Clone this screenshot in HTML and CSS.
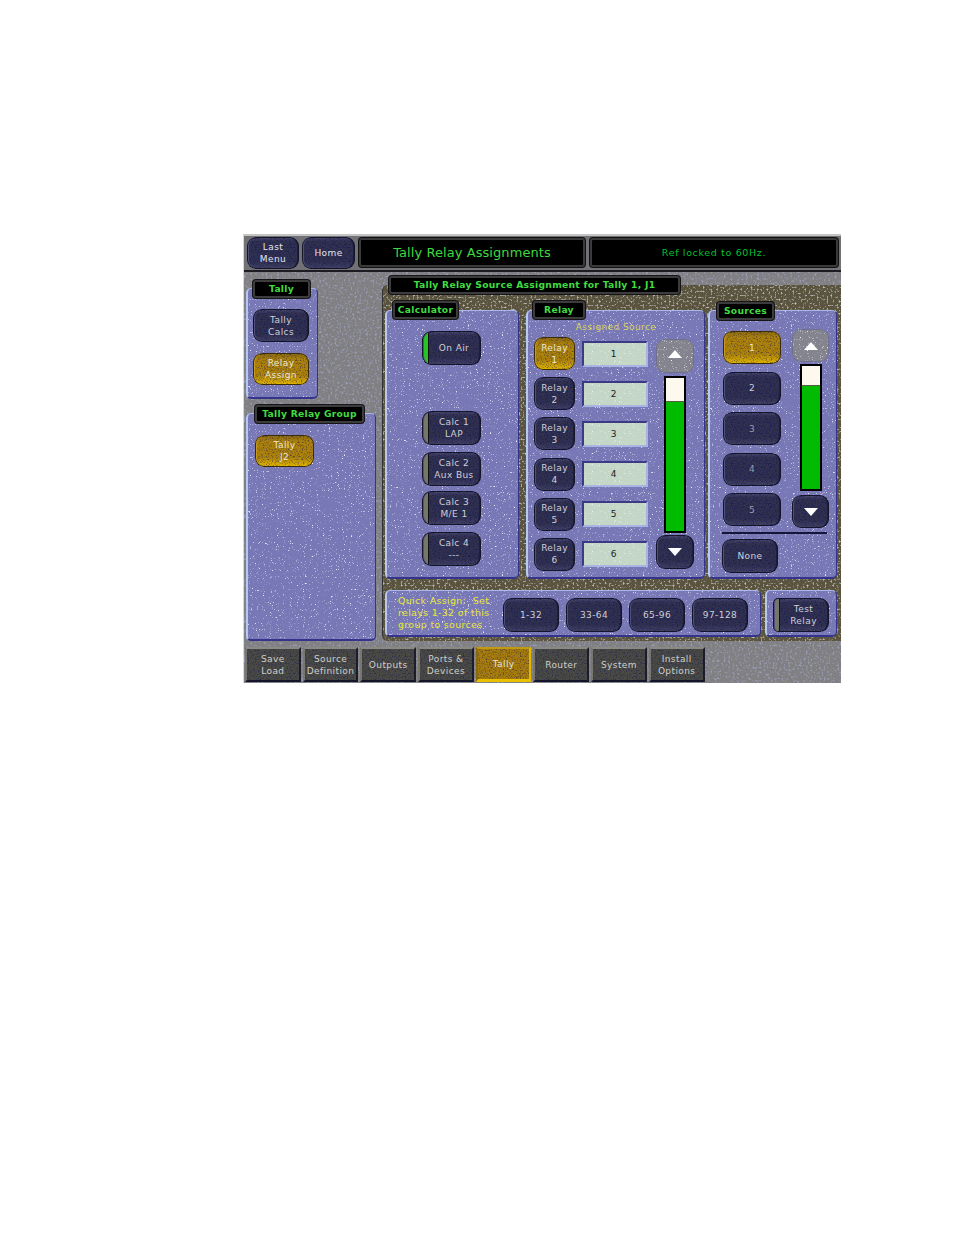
FILE: index.html
```html
<!DOCTYPE html>
<html lang="en">
<head>
    <meta charset="UTF-8">
    <title>Tally Relay Assignments</title>
    <link rel="stylesheet" href="styles.css">
</head>
<body>

<div class="app">
    <!-- Top bar -->
    <div class="topbar">
        <button class="btn top-btn">Last<br>Menu</button>
        <button class="btn top-btn home">Home</button>
        <div class="readout title-readout">Tally Relay Assignments</div>
        <div class="readout status-readout">Ref locked to 60Hz.</div>
    </div>

    <div class="workspace">
        <!-- Left column -->
        <div class="side">
            <div class="panel tally-panel">
                <div class="label tally-label">Tally</div>
                <button class="btn side-btn first">Tally<br>Calcs</button>
                <button class="btn gold side-btn">Relay<br>Assign</button>
            </div>
            <div class="panel group-panel">
                <div class="label group-label">Tally Relay Group</div>
                <button class="btn gold group-btn">Tally<br>J2</button>
            </div>
        </div>

        <!-- Main area -->
        <div class="main">
            <div class="label main-label">Tally Relay Source Assignment for Tally 1, J1</div>
            <div class="columns">
                <div class="panel calc-panel">
                    <div class="label calc-label">Calculator</div>
                    <button class="btn led on calc-btn on-air">On Air</button>
                    <button class="btn led calc-btn calc-1">Calc 1<br>LAP</button>
                    <button class="btn led calc-btn">Calc 2<br>Aux Bus</button>
                    <button class="btn led calc-btn calc-3">Calc 3<br>M/E 1</button>
                    <button class="btn led calc-btn">Calc 4<br>---</button>
                </div>

                <div class="panel relay-panel">
                    <div class="label relay-label">Relay</div>
                    <div class="caption">Assigned Source</div>
                    <div class="relay-body">
                        <div class="relay-grid">
                            <button class="btn gold relay-btn">Relay<br>1</button><div class="field">1</div>
                            <button class="btn relay-btn">Relay<br>2</button><div class="field">2</div>
                            <button class="btn relay-btn">Relay<br>3</button><div class="field">3</div>
                            <button class="btn relay-btn">Relay<br>4</button><div class="field">4</div>
                            <button class="btn relay-btn">Relay<br>5</button><div class="field">5</div>
                            <button class="btn relay-btn">Relay<br>6</button><div class="field">6</div>
                        </div>
                        <div class="scroller relay-scroller">
                            <button class="btn arrow disabled"><svg width="14" height="8" viewBox="0 0 14 8"><polygon points="7,0 14,8 0,8" fill="#fff"/></svg></button>
                            <div class="track"><div class="thumb relay-thumb"></div></div>
                            <button class="btn arrow"><svg width="14" height="8" viewBox="0 0 14 8"><polygon points="0,0 14,0 7,8" fill="#fff"/></svg></button>
                        </div>
                    </div>
                </div>

                <div class="panel sources-panel">
                    <div class="label sources-label">Sources</div>
                    <div class="sources-body">
                        <div class="sources-list">
                            <button class="btn gold source-btn">1</button>
                            <button class="btn source-btn">2</button>
                            <button class="btn source-btn dim">3</button>
                            <button class="btn source-btn dim">4</button>
                            <button class="btn source-btn dim">5</button>
                        </div>
                        <div class="scroller sources-scroller">
                            <button class="btn arrow disabled"><svg width="14" height="8" viewBox="0 0 14 8"><polygon points="7,0 14,8 0,8" fill="#fff"/></svg></button>
                            <div class="track"><div class="thumb sources-thumb"></div></div>
                            <button class="btn arrow"><svg width="14" height="8" viewBox="0 0 14 8"><polygon points="0,0 14,0 7,8" fill="#fff"/></svg></button>
                        </div>
                    </div>
                    <div class="rule"></div>
                    <button class="btn none-btn">None</button>
                </div>
            </div>

            <div class="bottom-row">
                <div class="panel quick-panel">
                    <div class="quick-text">Quick Assign:&nbsp; Set<br>relays 1-32 of this<br>group to sources</div>
                    <button class="btn quick-btn">1-32</button>
                    <button class="btn quick-btn">33-64</button>
                    <button class="btn quick-btn">65-96</button>
                    <button class="btn quick-btn">97-128</button>
                </div>
                <div class="panel test-panel">
                    <button class="btn led test-btn">Test<br>Relay</button>
                </div>
            </div>
        </div>
    </div>

    <!-- Bottom tabs -->
    <div class="tabs">
        <div class="tab">Save<br>Load</div>
        <div class="tab">Source<br>Definition</div>
        <div class="tab">Outputs</div>
        <div class="tab">Ports &amp;<br>Devices</div>
        <div class="tab active">Tally</div>
        <div class="tab">Router</div>
        <div class="tab">System</div>
        <div class="tab">Install<br>Options</div>
    </div>
</div>

</body>
</html>
```

FILE: styles.css
```css
/* General Styles */
:root {
    --speck: url("data:image/svg+xml,%3Csvg xmlns='http://www.w3.org/2000/svg' width='240' height='240'%3E%3Cfilter id='n'%3E%3CfeTurbulence type='fractalNoise' baseFrequency='.85' numOctaves='2' seed='4'/%3E%3CfeColorMatrix values='0 0 0 0 .86 0 0 0 0 .88 0 0 0 0 1 0 0 0 5 -3.2'/%3E%3C/filter%3E%3Crect width='240' height='240' filter='url(%23n)'/%3E%3C/svg%3E");
    --grain: url("data:image/svg+xml,%3Csvg xmlns='http://www.w3.org/2000/svg' width='240' height='240'%3E%3Cfilter id='n'%3E%3CfeTurbulence type='fractalNoise' baseFrequency='.7' numOctaves='2' seed='7'/%3E%3CfeColorMatrix values='0 0 0 0 0 0 0 0 0 0 0 0 0 0 .1 0 0 0 1.4 -.68'/%3E%3C/filter%3E%3Crect width='240' height='240' filter='url(%23n)'/%3E%3C/svg%3E");
    --fleck: url("data:image/svg+xml,%3Csvg xmlns='http://www.w3.org/2000/svg' width='240' height='240'%3E%3Cfilter id='n'%3E%3CfeTurbulence type='fractalNoise' baseFrequency='.45' numOctaves='3' seed='9'/%3E%3CfeColorMatrix values='0 0 0 0 .33 0 0 0 0 .33 0 0 0 0 .46 0 0 0 4 -2.1'/%3E%3C/filter%3E%3Crect width='240' height='240' filter='url(%23n)'/%3E%3C/svg%3E");
    --fleck-light: url("data:image/svg+xml,%3Csvg xmlns='http://www.w3.org/2000/svg' width='240' height='240'%3E%3Cfilter id='n'%3E%3CfeTurbulence type='fractalNoise' baseFrequency='.5' numOctaves='3' seed='2'/%3E%3CfeColorMatrix values='0 0 0 0 .5 0 0 0 0 .5 0 0 0 0 .5 0 0 0 4 -2.1'/%3E%3C/filter%3E%3Crect width='240' height='240' filter='url(%23n)'/%3E%3C/svg%3E");
}

* {
    box-sizing: border-box;
}

body {
    margin: 0;
    padding: 234px 0 0 243px;
    height: 1235px;
    background-color: #ffffff;
    font-family: "DejaVu Sans", sans-serif;
    overflow: hidden;
}

.app {
    width: 598px;
    height: 449px;
    display: flex;
    flex-direction: column;
    background-color: #808083;
    background-image: var(--fleck);
    border-top: 2px solid #c4c4c4;
    border-left: 1px solid #d8d8d8;
}

/* Top bar */
.topbar {
    height: 36px;
    flex: none;
    display: flex;
    gap: 3px;
    padding: 1px 2px 0 3px;
    background-color: #727276;
    border-bottom: 2px solid #1c1c22;
}

.readout {
    height: 29px;
    margin-top: 1px;
    display: flex;
    align-items: center;
    justify-content: center;
    background-color: #000;
    border: 2px solid #3a3a3a;
    border-radius: 3px;
    box-shadow: 0 0 0 1px #111;
}

.title-readout {
    width: 226px;
    margin-left: 1px;
    color: #3fd83f;
    font-size: 13px;
    letter-spacing: 0.07px;
}

.status-readout {
    width: 248px;
    margin-left: 2px;
    color: #00c030;
    font-size: 9.5px;
    letter-spacing: 0.65px;
}

/* Buttons */
.btn {
    display: flex;
    align-items: center;
    justify-content: center;
    padding: 0;
    border: 0;
    border-radius: 9px;
    background: var(--grain), linear-gradient(#4c4c70 0, #30304f 14%, #30304f 78%, #444466 100%);
    box-shadow: inset 0 0 0 1px #14142a, inset 2px 0 0 #50507a, inset -2px 0 0 #1e1e3a;
    color: #cfcfd6;
    font-family: inherit;
    font-size: 9px;
    line-height: 12px;
    letter-spacing: 0.4px;
    text-align: center;
}

.dim {
    color: #9c9cac;
}

.gold {
    background: var(--grain), linear-gradient(#8a6a10 0, #ac820c 20%, #ac820a 70%, #e8bc00 100%);
    box-shadow: inset 0 0 0 1px #3a2c08, inset 2px 0 0 #c49a20;
    color: #ece8d0;
}

.led {
    padding-left: 5px;
    background: linear-gradient(90deg, #74776a 0 6px, #111 6px 7px, transparent 7px), var(--grain), linear-gradient(#4c4c70 0, #30304f 14%, #30304f 78%, #444466 100%);
}

.led.on {
    background: linear-gradient(90deg, #27c427 0 6px, #111 6px 7px, transparent 7px), var(--grain), linear-gradient(#4c4c70 0, #30304f 14%, #30304f 78%, #444466 100%);
}

.top-btn {
    width: 52px;
    height: 32px;
    color: #e4e4ec;
}

.top-btn.home {
    width: 53px;
}

/* Panels and labels */
.panel {
    background-color: #7878b6;
    background-image: var(--speck);
    border: 1px solid;
    border-color: #a9b6ea #34348a #34348a #b4c8f0;
    border-left-width: 2px;
    border-bottom-width: 2px;
    border-radius: 5px;
}

.label {
    height: 18px;
    padding-bottom: 2px;
    display: flex;
    align-items: center;
    justify-content: center;
    background-color: #000;
    border: 2px solid #3c3c3c;
    border-radius: 3px;
    box-shadow: 0 0 0 1px #15151a;
    color: #40dc40;
    font-size: 9.2px;
    font-weight: bold;
    letter-spacing: 0.28px;
    white-space: nowrap;
}

.workspace {
    flex: none;
    height: 373px;
    display: flex;
}

/* Left column */
.side {
    width: 130px;
    margin-left: 2px;
    flex: none;
}

.tally-panel {
    width: 72px;
    height: 111px;
    margin-top: 16px;
    padding-left: 5px;
}

.tally-label {
    width: 57px;
    margin-top: -9px;
}

.side-btn {
    width: 56px;
    height: 32px;
    margin-top: 11px;
}

.side-btn.first {
    height: 33px;
}

.group-panel {
    height: 228px;
    margin-top: 14px;
    padding-left: 7px;
}

.group-label {
    width: 109px;
    margin-top: -9px;
}

.group-btn {
    width: 59px;
    height: 32px;
    margin-top: 12px;
}

/* Main area */
.main {
    width: 459px;
    height: 356px;
    margin: 13px 0 0 6px;
    flex: none;
    padding: 0 4px 0 2px;
    background-color: #5a543e;
    background-image: var(--fleck-light);
    border-radius: 6px 0 0 6px;
    border-left: 1px solid #333;
}

.main-label {
    width: 291px;
    margin: -9px 0 0 4px;
}

.columns {
    display: flex;
    margin-top: 16px;
}

.calc-panel {
    width: 134px;
    height: 269px;
    flex: none;
}

.calc-label {
    width: 65px;
    margin: -10px 0 0 6px;
}

.calc-btn {
    width: 59px;
    height: 34px;
    margin: 7px 0 0 35px;
}

.calc-btn.on-air {
    margin-top: 12px;
}

.calc-btn.calc-1 {
    margin-top: 46px;
}

.calc-btn.calc-3 {
    margin-top: 5px;
}

.relay-panel {
    width: 179px;
    height: 269px;
    margin-left: 7px;
    flex: none;
}

.relay-label {
    width: 52px;
    margin: -10px 0 0 5px;
}

.caption {
    height: 10px;
    margin-top: 3px;
    color: #d6d65a;
    font-size: 9px;
    line-height: 10px;
    letter-spacing: 0.4px;
    text-align: center;
}

.relay-body {
    display: flex;
    margin: 5px 0 0 6px;
}

.relay-grid {
    display: grid;
    grid-template-columns: 41px 66px;
    grid-auto-rows: 33px;
    column-gap: 7px;
    row-gap: 7.2px;
    align-items: center;
}

.relay-btn {
    height: 33px;
}

.field {
    height: 26px;
    padding-right: 3px;
    display: flex;
    align-items: center;
    justify-content: center;
    background-color: #c4d6c6;
    background-image: var(--speck);
    border: 2px solid;
    border-color: #3a3a86 #a8b4e4 #a8b4e4 #3a3a86;
    color: #1a1a22;
    font-size: 9px;
}

/* Scroll controls */
.scroller {
    display: flex;
    flex-direction: column;
    align-items: center;
    flex: none;
}

.relay-scroller {
    width: 38px;
    margin: 2px 0 0 8px;
}

.relay-scroller .disabled {
    padding-bottom: 4px;
}

.arrow {
    width: 100%;
    height: 34px;
    flex: none;
}

.arrow.disabled {
    background: #84848e;
    background-image: var(--speck);
    box-shadow: inset 0 0 0 1px #70708a;
}

.track {
    width: 22px;
    background-color: #00bb00;
    border: 2px solid #000;
    margin: 3px 0 2px;
}

.relay-scroller .track {
    height: 157px;
}

.thumb {
    background-color: #fdf9ee;
    border-bottom: 1px solid #5a5a40;
}

.relay-thumb {
    height: 24px;
}

.sources-thumb {
    height: 20px;
}

/* Sources */
.sources-panel {
    width: 129px;
    height: 269px;
    margin-left: 3px;
    flex: none;
}

.sources-label {
    width: 57px;
    margin: -9px 0 0 7px;
}

.sources-body {
    display: flex;
    margin-left: 13px;
}

.sources-list {
    width: 58px;
    margin-top: 11px;
    display: flex;
    flex-direction: column;
    gap: 7.5px;
    flex: none;
}

.source-btn {
    height: 33px;
}

.sources-scroller {
    width: 37px;
    margin: 9px 0 0 11px;
}

.sources-scroller .arrow {
    height: 33px;
}

.sources-scroller .track {
    height: 127px;
    margin: 2px 0 4px;
}

.rule {
    width: 105px;
    height: 2px;
    margin: 4px 0 0 12px;
    background-color: #15153a;
}

.none-btn {
    width: 56px;
    height: 34px;
    margin: 5px 0 0 12px;
}

/* Quick assign row */
.bottom-row {
    display: flex;
    gap: 4px;
    margin-top: 11px;
}

.quick-panel {
    width: 376px;
    height: 47px;
    display: flex;
    align-items: center;
    flex: none;
}

.quick-text {
    width: 116px;
    padding-left: 11px;
    color: #e8e830;
    font-size: 9.5px;
    line-height: 12px;
    letter-spacing: 0.3px;
    white-space: nowrap;
}

.quick-btn {
    width: 56px;
    height: 34px;
    margin: 7px 7px 0 0;
    align-self: flex-start;
    flex: none;
}

.test-panel {
    width: 72px;
    height: 47px;
    padding: 7px 0 0 6px;
    flex: none;
}

.test-btn {
    width: 56px;
    height: 34px;
    border-radius: 5px 9px 9px 5px;
}

/* Bottom tabs */
.tabs {
    height: 36px;
    margin-top: 2px;
    padding-left: 1px;
    display: flex;
    gap: 2px;
}

.tab {
    width: 55.7px;
    height: 35px;
    display: flex;
    align-items: center;
    justify-content: center;
    background-color: #4a4a44;
    background-image: var(--grain);
    border: 2px solid;
    border-color: #8a8a84 #1c1c2a #14142a #77776f;
    color: #cfcfc8;
    font-size: 9px;
    line-height: 12px;
    letter-spacing: 0.4px;
    text-align: center;
}

.tab.active {
    background-color: #a67c0c;
    border-color: #c09a10 #e0b800 #e8c000 #8a6a10;
    border-bottom-width: 3px;
    color: #e8e4d0;
}
```
